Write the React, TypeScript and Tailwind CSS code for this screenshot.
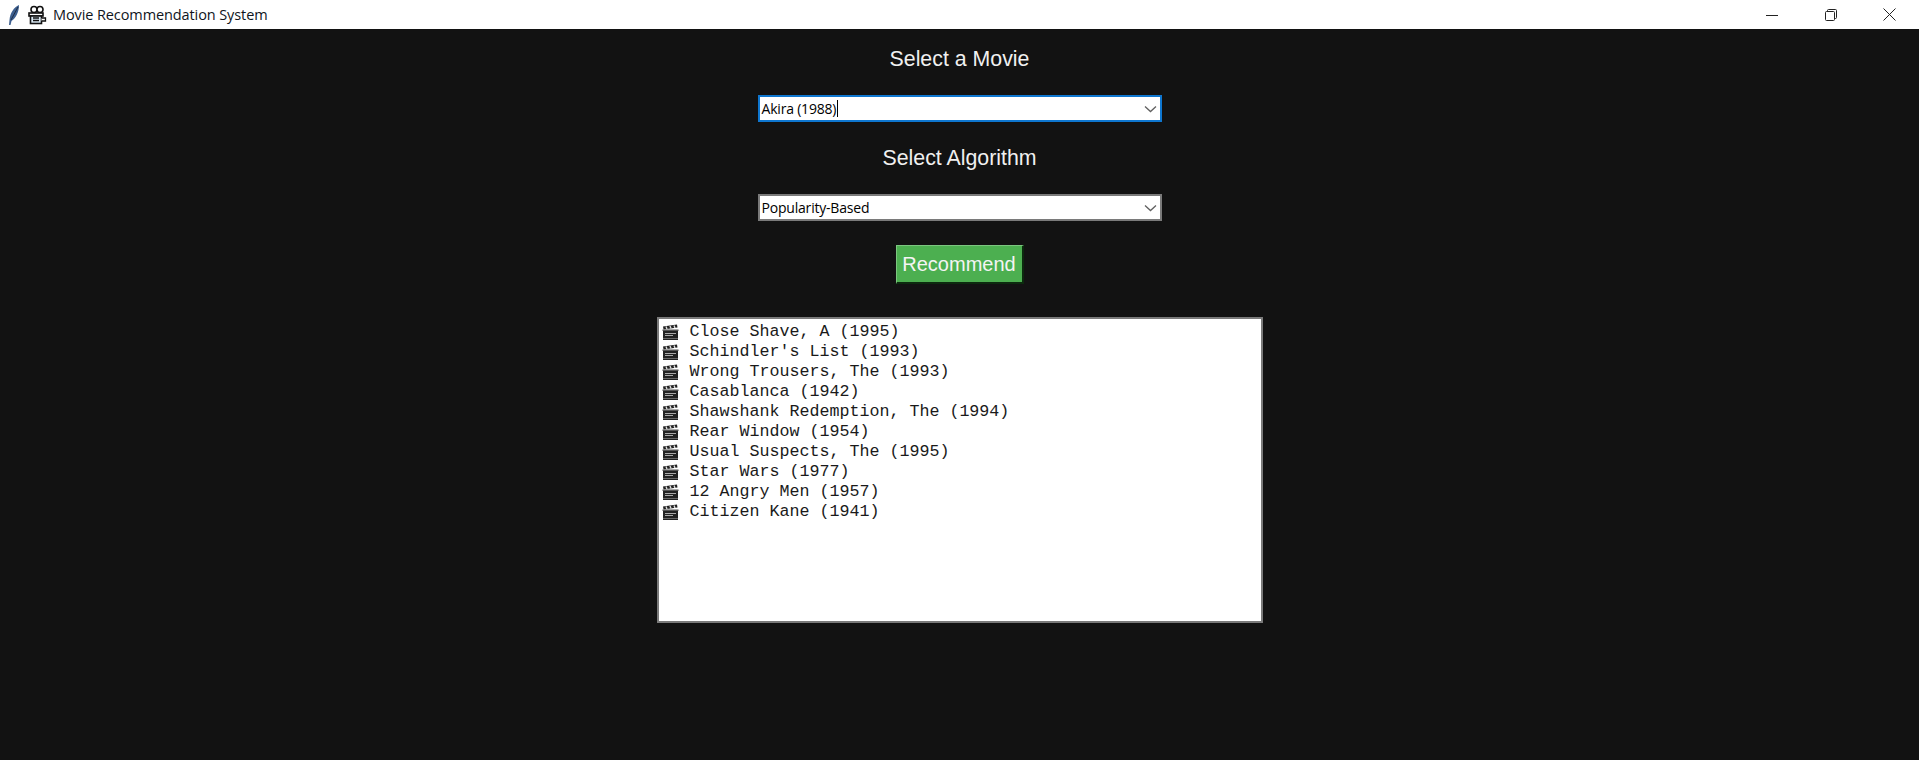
const movies = [
  "Close Shave, A (1995)",
  "Schindler's List (1993)",
  "Wrong Trousers, The (1993)",
  "Casablanca (1942)",
  "Shawshank Redemption, The (1994)",
  "Rear Window (1954)",
  "Usual Suspects, The (1995)",
  "Star Wars (1977)",
  "12 Angry Men (1957)",
  "Citizen Kane (1941)",
];

function Clapper() {
  return (
    <svg width="17" height="17" viewBox="0 0 17 17" className="shrink-0">
      <rect x="1" y="7" width="15" height="9" fill="#222" />
      <path d="M1 2.5 15 0.5 15.5 3.5 1.5 5.5Z" fill="#222" />
      <path d="M4 2.5 5 5M8 2 9 4.5M12 1.5 13 4" stroke="#ddd" strokeWidth="1.4" />
      <path d="M3 9.5h11M3 11.5h8" stroke="#aaa" strokeWidth="1" />
      <rect x="0.5" y="5.5" width="16" height="1.5" fill="#555" />
      <rect x="1" y="14" width="15" height="1" fill="#666" />
    </svg>
  );
}

function Chevron() {
  return (
    <svg width="13" height="8" viewBox="0 0 13 8" fill="none" className="shrink-0">
      <path d="M1 1.5 6.5 6.5 12 1.5" stroke="#606060" strokeWidth="1.3" />
    </svg>
  );
}

function Combo({ value, focused }: { value: string; focused?: boolean }) {
  return (
    <div
      className={
        "flex h-[27px] w-[404px] items-center justify-between border-2 bg-white pl-[2px] pr-[3px] font-['Open_Sans',sans-serif] text-[14px] text-black " +
        (focused ? "border-[#0e76cf]" : "border-[#7a7a7a]")
      }
    >
      <span className="flex items-center whitespace-nowrap tracking-[-0.2px]">
        {value}
        {focused && <span className="ml-px h-[17px] w-px bg-black" />}
      </span>
      <Chevron />
    </div>
  );
}

export default function App() {
  return (
    <div className="flex h-[760px] w-[1919px] flex-col overflow-hidden bg-[#121212] font-['Liberation_Sans',sans-serif]">
      <header className="flex h-[29px] items-center justify-between bg-white">
        <div className="flex items-center">
          <svg width="16" height="24" viewBox="0 0 16 24" className="ml-[6px]">
            <path d="M13 2C8 4 4 10 3.5 17L3 22 4.5 22 5.5 18C10 15 13 9 13 2Z" fill="#3d5f8f" />
            <path d="M12 4 5 17" stroke="#1d2c45" strokeWidth="1" />
          </svg>
          <svg width="20" height="20" viewBox="0 0 20 20" className="ml-[5px]" fill="none">
            <circle cx="7" cy="4.5" r="3" fill="#fff" stroke="#111" strokeWidth="1.6" />
            <circle cx="13" cy="4.5" r="3" fill="#fff" stroke="#111" strokeWidth="1.6" />
            <rect x="2" y="8" width="14" height="3" fill="#fff" stroke="#111" strokeWidth="1.6" />
            <rect x="3.5" y="11" width="11" height="7.5" fill="#dbeaf5" stroke="#111" strokeWidth="1.6" />
            <path d="M6 13h6M6 15.5h6" stroke="#111" strokeWidth="1.3" />
            <path d="M14.5 13h4v3h-4" fill="#fff" stroke="#111" strokeWidth="1.3" />
          </svg>
          <span className="ml-[6px] font-['Open_Sans',sans-serif] text-[14.5px] tracking-[-0.1px] text-[#10151c]">
            Movie Recommendation System
          </span>
        </div>
        <div className="flex h-full items-center text-black">
          <div className="flex h-full w-[59px] items-center justify-center">
            <svg width="12" height="12" viewBox="0 0 12 12"><path d="M0 6.5h12" stroke="#222" /></svg>
          </div>
          <div className="flex h-full w-[59px] items-center justify-center">
            <svg width="12" height="12" viewBox="0 0 12 12" fill="none">
              <rect x="0.5" y="2.5" width="9" height="9" rx="1" stroke="#222" />
              <path d="M2.5 2.5V1.5a1 1 0 0 1 1-1h7a1 1 0 0 1 1 1v7a1 1 0 0 1-1 1h-1" stroke="#222" />
            </svg>
          </div>
          <div className="flex h-full w-[59px] items-center justify-center">
            <svg width="13" height="13" viewBox="0 0 13 13"><path d="M0.5 0.5 12.5 12.5M12.5 0.5 0.5 12.5" stroke="#222" /></svg>
          </div>
        </div>
      </header>

      <main className="flex flex-1 flex-col items-center">
        <h2 className="mt-[15px] h-[30px] text-[21.33px] leading-[30px] text-[#f0f0f0]">Select a Movie</h2>
        <div className="mt-[21px]"><Combo value="Akira (1988)" focused /></div>
        <h2 className="mt-[21px] h-[30px] text-[21.33px] leading-[30px] text-[#f0f0f0]">Select Algorithm</h2>
        <div className="mt-[21px]"><Combo value="Popularity-Based" /></div>
        <button className="mt-[24px] flex h-[39px] w-[128px] items-center justify-center border-b-2 border-l border-r-2 border-t border-b-[#0c2a0e] border-l-[#7cc67f] border-r-[#0c2a0e] border-t-[#7cc67f] bg-[#4caf50] text-[20px] text-[#f4f4f4]">
          Recommend
        </button>
        <div className="mt-[33px] flex h-[306px] w-[606px] flex-col border-2 border-[#7a7a7a] bg-white pl-[3px] pt-[3px]">
          {movies.map((m) => (
            <div key={m} className="flex h-[20px] items-center">
              <Clapper />
              <span className="ml-[11px] whitespace-pre font-['Liberation_Mono',monospace] text-[16.67px] leading-[20px] text-[#1a1a1a]">
                {m}
              </span>
            </div>
          ))}
        </div>
      </main>
    </div>
  );
}
